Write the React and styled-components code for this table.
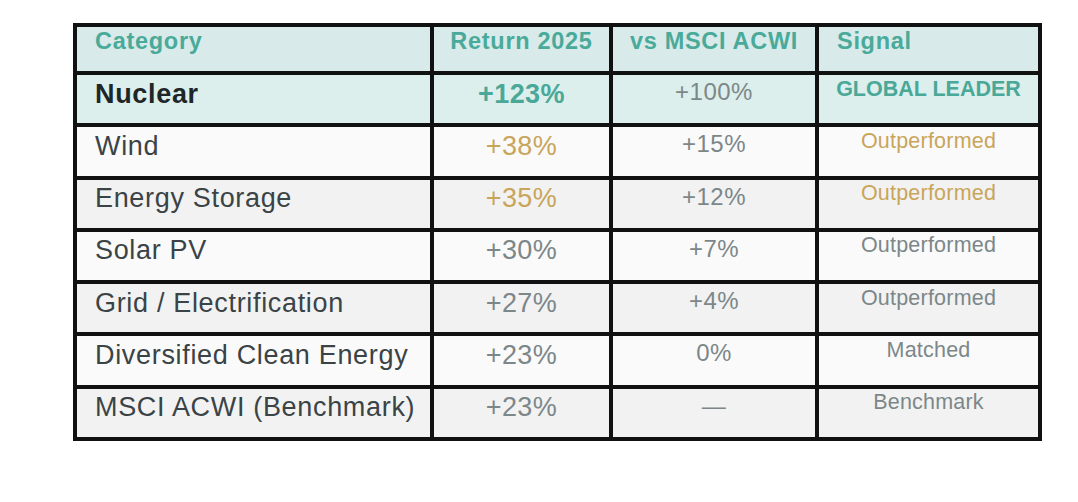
import React from 'react';
import styled, { createGlobalStyle } from 'styled-components';

const GlobalStyle = createGlobalStyle`
  html, body {
    margin: 0;
    padding: 0;
    background: #ffffff;
  }
  body {
    font-family: "Liberation Sans", Arial, sans-serif;
  }
`;

const Page = styled.div`
  width: 1078px;
  height: 502px;
  padding: 23px 0 0 73px;
  box-sizing: border-box;
  background: #ffffff;
`;

const Table = styled.table`
  border-collapse: collapse;
  table-layout: fixed;
  width: 965px;
  border: 4px solid #111;
`;

const HeadRow = styled.tr`
  height: 48px;
  background: #d8eaea;
`;

const Row = styled.tr`
  height: 52.3px;
  background: ${p => (p.$lead ? '#dcefed' : p.$shade ? '#f2f2f2' : '#fafafa')};
`;

const Th = styled.th`
  border: 4px solid #111;
  padding: ${p => (p.$left ? '3px 18px 0' : '3px 0 0')};
  vertical-align: top;
  text-align: ${p => (p.$left ? 'left' : 'center')};
  font-size: 23.5px;
  line-height: 1;
  letter-spacing: 0.03em;
  font-weight: 700;
  color: #4aaa9a;
  white-space: nowrap;
`;

const Name = styled.td`
  border: 4px solid #111;
  padding: 5.5px 18px 0;
  vertical-align: top;
  font-size: 27px;
  line-height: 1;
  letter-spacing: 0.025em;
  font-weight: ${p => (p.$lead ? 700 : 400)};
  color: ${p => (p.$lead ? '#1e2628' : '#3a4346')};
  white-space: nowrap;
`;

const toneColor = {
  teal: '#4aa898',
  gold: '#c9a55a',
  grey: '#7c8789',
};

const Ret = styled.td`
  border: 4px solid #111;
  padding: 5.5px 0 0;
  vertical-align: top;
  text-align: center;
  font-size: 27px;
  line-height: 1;
  letter-spacing: 0.015em;
  font-weight: ${p => (p.$tone === 'teal' ? 700 : 400)};
  color: ${p => toneColor[p.$tone]};
`;

const Vs = styled.td`
  border: 4px solid #111;
  padding: 5px 0 0;
  vertical-align: top;
  text-align: center;
  font-size: 24px;
  line-height: 1;
  letter-spacing: 0.02em;
  color: #7c8789;
`;

const Sig = styled.td`
  border: 4px solid #111;
  padding: 3.5px 0 0;
  vertical-align: top;
  text-align: center;
  font-size: 21.5px;
  line-height: 1;
  letter-spacing: ${p => (p.$tone === 'teal' ? '0' : '0.01em')};
  font-weight: ${p => (p.$tone === 'teal' ? 700 : 400)};
  color: ${p => toneColor[p.$tone]};
  white-space: nowrap;
`;

const rows = [
  { name: 'Nuclear', ret: '+123%', vs: '+100%', signal: 'GLOBAL LEADER', tone: 'teal', lead: true },
  { name: 'Wind', ret: '+38%', vs: '+15%', signal: 'Outperformed', tone: 'gold' },
  { name: 'Energy Storage', ret: '+35%', vs: '+12%', signal: 'Outperformed', tone: 'gold' },
  { name: 'Solar PV', ret: '+30%', vs: '+7%', signal: 'Outperformed', tone: 'grey' },
  { name: 'Grid / Electrification', ret: '+27%', vs: '+4%', signal: 'Outperformed', tone: 'grey' },
  { name: 'Diversified Clean Energy', ret: '+23%', vs: '0%', signal: 'Matched', tone: 'grey' },
  { name: 'MSCI ACWI (Benchmark)', ret: '+23%', vs: '—', signal: 'Benchmark', tone: 'grey' },
];

export default function App() {
  return (
    <Page>
      <GlobalStyle />
      <Table>
        <colgroup>
          <col style={{ width: 357 }} />
          <col style={{ width: 179 }} />
          <col style={{ width: 206 }} />
          <col style={{ width: 223 }} />
        </colgroup>
        <thead>
          <HeadRow>
            <Th $left>Category</Th>
            <Th>Return 2025</Th>
            <Th>vs MSCI ACWI</Th>
            <Th $left>Signal</Th>
          </HeadRow>
        </thead>
        <tbody>
          {rows.map((r, i) => (
            <Row key={r.name} $lead={r.lead} $shade={i % 2 === 0}>
              <Name $lead={r.lead}>{r.name}</Name>
              <Ret $tone={r.tone}>{r.ret}</Ret>
              <Vs>{r.vs}</Vs>
              <Sig $tone={r.tone}>{r.signal}</Sig>
            </Row>
          ))}
        </tbody>
      </Table>
    </Page>
  );
}
